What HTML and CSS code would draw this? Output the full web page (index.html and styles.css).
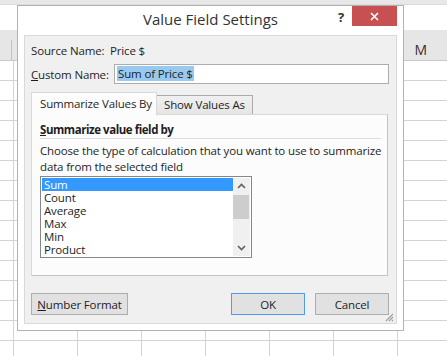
FILE: index.html
```html
<!DOCTYPE html>
<html lang="en">

<head>
    <meta charset="UTF-8">
    <meta name="viewport" content="width=device-width, initial-scale=1.0">
    <title>Value Field Settings</title>
    <link rel="stylesheet" href="styles.css">
</head>

<body>
    <div class="sheet">
        <div class="ribbon-edge"></div>
        <div class="formula-gap"></div>
        <div class="col-headers">
            <div class="corner"></div>
            <div class="col-m">M</div>
        </div>
        <div class="cells"></div>
    </div>

    <div class="dialog">
        <div class="title-bar">
            <span class="title">Value Field Settings</span>
            <span class="help">?</span>
            <button class="close" aria-label="Close">
                <svg width="9" height="9" viewBox="0 0 9 9">
                    <path d="M1 1 L8 8 M8 1 L1 8" stroke="#fff" stroke-width="1.6" />
                </svg>
            </button>
        </div>

        <div class="client">
            <div class="field-row">
                <span class="label source-label">Source Name:</span>
                <span>Price $</span>
            </div>
            <div class="field-row">
                <label class="label custom-label" for="custom-name"><u>C</u>ustom Name:</label>
                <div class="text-input" id="custom-name"><span class="selected">Sum of Price $</span></div>
            </div>

            <div class="tabs">
                <div class="tab active">Summarize Values By</div>
                <div class="tab">Show Values As</div>
            </div>
            <div class="tab-panel">
                <div class="group-title"><u>S</u>ummarize value field by</div>
                <p class="hint">Choose the type of calculation that you want to use to summarize<br>data from the selected field</p>
                <div class="listbox">
                    <ul class="items">
                        <li class="selected">Sum</li>
                        <li>Count</li>
                        <li>Average</li>
                        <li>Max</li>
                        <li>Min</li>
                        <li>Product</li>
                    </ul>
                    <div class="scrollbar">
                        <div class="arrow">
                            <svg width="9" height="6" viewBox="0 0 9 6">
                                <path d="M1 5 L4.5 1.5 L8 5" stroke="#606060" stroke-width="1.6" fill="none" />
                            </svg>
                        </div>
                        <div class="thumb"></div>
                        <div class="track"></div>
                        <div class="arrow">
                            <svg width="9" height="6" viewBox="0 0 9 6">
                                <path d="M1 1 L4.5 4.5 L8 1" stroke="#606060" stroke-width="1.6" fill="none" />
                            </svg>
                        </div>
                    </div>
                </div>
            </div>

            <div class="buttons">
                <button class="btn wide"><u>N</u>umber Format</button>
                <span class="spacer"></span>
                <button class="btn default">OK</button>
                <button class="btn">Cancel</button>
            </div>

            <svg class="grip" width="9" height="9" viewBox="0 0 9 9">
                <path d="M8 1 L1 8 M8 4 L4 8 M8 7 L7 8" stroke="#a0a0a0" stroke-width="1.2" />
            </svg>
        </div>
    </div>
</body>

</html>
```

FILE: styles.css
```css
body {
    margin: 0;
    background: #fff;
    font-family: "Open Sans", "Noto Sans", sans-serif;
    font-size: 11.5px;
    letter-spacing: -0.15px;
    color: #1e1e1e;
    white-space: nowrap;
    overflow: hidden;
}

/* spreadsheet behind the dialog */
.sheet {
    height: 356px;
}

.ribbon-edge {
    height: 4px;
    background: #e8e8e8;
    border-bottom: 1px solid #dcdcdc;
}

.formula-gap {
    height: 25px;
    background: #fff;
}

.col-headers {
    display: flex;
    align-items: flex-end;
    height: 30px;
    background: #e6e6e6;
    border-bottom: 1px solid #c9c9c9;
}

.corner {
    width: 13px;
    height: 20px;
    border-right: 1px solid #c2c2c2;
}

.col-m {
    margin-left: 383px;
    width: 64px;
    height: 20px;
    line-height: 20px;
    text-align: center;
    font-size: 14px;
    color: #333;
}

.cells {
    height: 295px;
    background-image:
        repeating-linear-gradient(to bottom, transparent 0 19px, #d4d4d4 19px 20px),
        repeating-linear-gradient(to right, transparent 0 13px, #d4d4d4 13px 14px, transparent 14px 64px);
}

/* dialog window */
.dialog {
    position: absolute;
    left: 17px;
    top: 5px;
    width: 387px;
    height: 326px;
    box-sizing: border-box;
    border: 1px solid #b2b2b2;
    background: #fff;
    padding: 0 6px 6px;
}

.title-bar {
    position: relative;
    height: 29px;
    text-align: center;
}

.title {
    display: inline-block;
    margin-top: 3px;
    font-size: 15px;
    letter-spacing: 0;
    color: #333;
}

.help {
    position: absolute;
    right: 53px;
    top: 2px;
    font-weight: bold;
    font-size: 13px;
    color: #333;
}

.close {
    position: absolute;
    right: 0;
    top: 0;
    width: 45px;
    height: 20px;
    border: none;
    background: #c75050;
    display: flex;
    align-items: center;
    justify-content: center;
    padding: 0;
}

.client {
    position: relative;
    height: 289px;
    box-sizing: border-box;
    border: 1px solid #d9d9d9;
    background: #f0f0f0;
    padding: 6px 7px 0 6px;
}

.field-row {
    display: flex;
    align-items: center;
    height: 16px;
    margin-bottom: 6px;
}

.field-row + .field-row {
    height: 20px;
    margin-bottom: 8px;
}

.source-label {
    width: 79px;
}

.custom-label {
    width: 83px;
}

.text-input {
    width: 275px;
    height: 20px;
    box-sizing: border-box;
    border: 1px solid #abadb3;
    background: #fff;
    padding: 1px 2px;
    line-height: 16px;
}

.text-input .selected {
    background: #99c9ef;
    padding: 0 1px;
}

/* tabs */
.tabs {
    display: flex;
    align-items: flex-end;
    height: 22px;
}

.tab {
    box-sizing: border-box;
    height: 19px;
    padding: 0 7px;
    line-height: 18px;
    border: 1px solid #acacac;
    border-bottom: none;
    border-left: none;
    background: linear-gradient(#f0f0f0, #e5e5e5);
}

.tab.active {
    position: relative;
    height: 23px;
    width: 126px;
    padding: 0 8px;
    line-height: 22px;
    border: 1px solid #d9d9d9;
    border-bottom: none;
    background: #fcfcfc;
    margin-bottom: -1px;
    z-index: 1;
}

.tab-panel {
    box-sizing: border-box;
    width: 357px;
    height: 162px;
    border: 1px solid #c3c3c3;
    border-top-color: #d9d9d9;
    border-left-color: #d9d9d9;
    background: #fcfcfc;
    padding: 7px 6px 0 8px;
}

.group-title {
    font-weight: bold;
    letter-spacing: -0.45px;
    line-height: 16px;
    border-bottom: 1px solid #dcdcdc;
    width: 341px;
}

.hint {
    margin: 4px 0 0;
    line-height: 16px;
}

.listbox {
    display: flex;
    box-sizing: border-box;
    width: 212px;
    height: 82px;
    margin-top: 1px;
    border: 1px solid #828790;
    background: #fff;
    padding: 1px;
}

.items {
    flex: 1;
    list-style: none;
    margin: 0;
    padding: 0;
}

.items li {
    height: 13px;
    line-height: 13px;
    padding-left: 2px;
}

.items li.selected {
    background: #3399ff;
    color: #fff;
}

.scrollbar {
    display: flex;
    flex-direction: column;
    width: 17px;
    background: #f0f0f0;
}

.arrow {
    height: 16px;
    display: flex;
    align-items: center;
    justify-content: center;
}

.thumb {
    height: 24px;
    margin: 1px 1px 0 0;
    background: #cdcdcd;
}

.track {
    flex: 1;
}

/* bottom buttons */
.buttons {
    display: flex;
    gap: 10px;
    margin-top: 17px;
}

.spacer {
    flex: 1;
}

.btn {
    width: 74px;
    height: 22px;
    box-sizing: border-box;
    border: 1px solid #adadad;
    background: #e1e1e1;
    font-family: inherit;
    font-size: 11.5px;
    letter-spacing: inherit;
    color: #1e1e1e;
    padding: 0;
}

.btn.wide {
    width: 97px;
}

.btn.default {
    border-color: #4d9de8;
}

.grip {
    position: absolute;
    right: 2px;
    bottom: 1px;
}
```
